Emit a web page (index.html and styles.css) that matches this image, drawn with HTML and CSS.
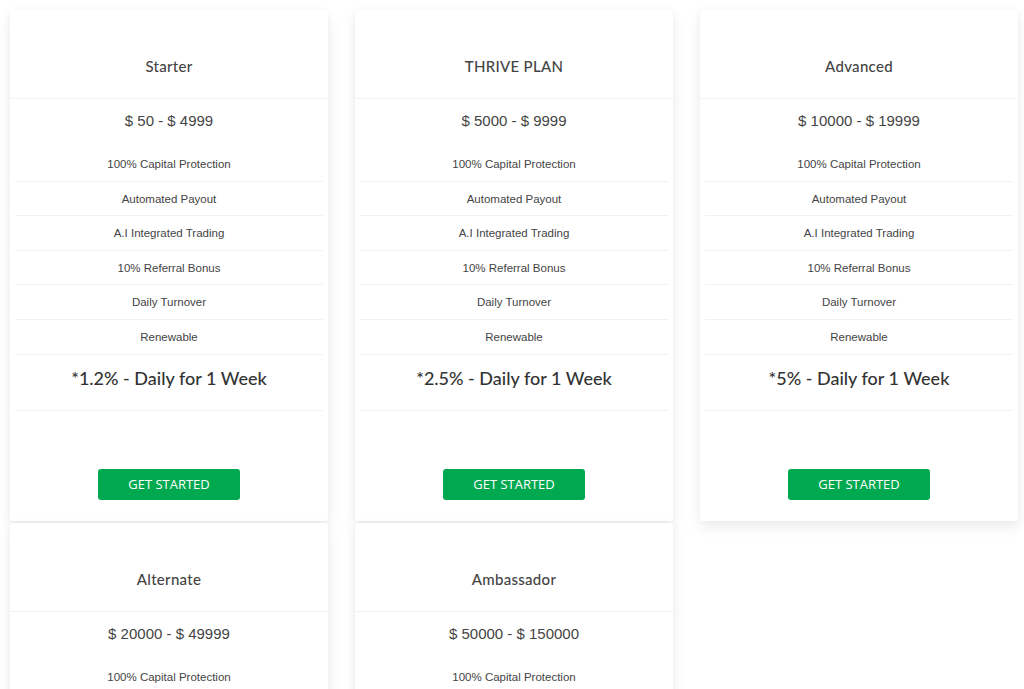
FILE: index.html
```html
<!DOCTYPE html>
<html>
<head>
<meta charset="utf-8">
<link rel="stylesheet" href="styles.css">
</head>
<body>
<div class="plans">
  <div class="card">
    <div class="title">Starter</div>
    <div class="price">$ 50 - $ 4999</div>
    <ul class="features">
      <li>100% Capital Protection</li>
      <li>Automated Payout</li>
      <li>A.I Integrated Trading</li>
      <li>10% Referral Bonus</li>
      <li>Daily Turnover</li>
      <li>Renewable</li>
    </ul>
    <div class="rate">*1.2% - Daily for 1 Week</div>
    <div class="action"><a class="btn">GET STARTED</a></div>
  </div>
  <div class="card">
    <div class="title">THRIVE PLAN</div>
    <div class="price">$ 5000 - $ 9999</div>
    <ul class="features">
      <li>100% Capital Protection</li>
      <li>Automated Payout</li>
      <li>A.I Integrated Trading</li>
      <li>10% Referral Bonus</li>
      <li>Daily Turnover</li>
      <li>Renewable</li>
    </ul>
    <div class="rate">*2.5% - Daily for 1 Week</div>
    <div class="action"><a class="btn">GET STARTED</a></div>
  </div>
  <div class="card">
    <div class="title">Advanced</div>
    <div class="price">$ 10000 - $ 19999</div>
    <ul class="features">
      <li>100% Capital Protection</li>
      <li>Automated Payout</li>
      <li>A.I Integrated Trading</li>
      <li>10% Referral Bonus</li>
      <li>Daily Turnover</li>
      <li>Renewable</li>
    </ul>
    <div class="rate">*5% - Daily for 1 Week</div>
    <div class="action"><a class="btn">GET STARTED</a></div>
  </div>
  <div class="card">
    <div class="title">Alternate</div>
    <div class="price">$ 20000 - $ 49999</div>
    <ul class="features">
      <li>100% Capital Protection</li>
      <li>Automated Payout</li>
      <li>A.I Integrated Trading</li>
      <li>10% Referral Bonus</li>
      <li>Daily Turnover</li>
      <li>Renewable</li>
    </ul>
    <div class="rate">*10% - Daily for 1 Week</div>
    <div class="action"><a class="btn">GET STARTED</a></div>
  </div>
  <div class="card">
    <div class="title">Ambassador</div>
    <div class="price">$ 50000 - $ 150000</div>
    <ul class="features">
      <li>100% Capital Protection</li>
      <li>Automated Payout</li>
      <li>A.I Integrated Trading</li>
      <li>10% Referral Bonus</li>
      <li>Daily Turnover</li>
      <li>Renewable</li>
    </ul>
    <div class="rate">*15% - Daily for 1 Week</div>
    <div class="action"><a class="btn">GET STARTED</a></div>
  </div>
</div>
</body>
</html>
```

FILE: styles.css
```css
html, body {
  margin: 0;
  padding: 0;
  background: #ffffff;
  height: 689px;
  overflow: hidden;
}
body {
  font-family: "Liberation Sans", Arial, sans-serif;
  color: #444;
}
.plans {
  display: grid;
  grid-template-columns: 318px 318px 318px;
  column-gap: 27px;
  row-gap: 2px;
  padding: 10px 0 0 10px;
  align-items: start;
}
.card {
  background: #fff;
  box-shadow: 0 6px 14px rgba(0, 0, 0, 0.08), 0 0 6px rgba(0, 0, 0, 0.03);
  border-radius: 2px;
  text-align: center;
}
.title {
  font-family: "Lato", "Noto Sans", sans-serif;
  font-size: 15px;
  font-weight: 500;
  color: #444;
  letter-spacing: 0.3px;
  padding: 46px 0 22px;
  line-height: 20px;
  border-bottom: 1px solid #f3f3f3;
}
.price {
  font-size: 15px;
  line-height: 20px;
  color: #444;
  padding: 12px 0 16px;
}
.features {
  list-style: none;
  margin: 0 5px;
  padding: 0;
}
.features li {
  font-size: 11.5px;
  line-height: 16px;
  color: #444;
  padding: 9px 0 8.6px;
  border-bottom: 1px solid #f2f2f2;
}
.rate {
  font-family: "Lato", "Noto Sans", sans-serif;
  font-size: 18px;
  font-weight: 500;
  color: #333;
  line-height: 24px;
  padding: 11px 0 20px;
  margin: 0 5px;
  border-bottom: 1px solid #f2f2f2;
}
.action {
  padding: 58px 0 21px;
}
.btn {
  display: inline-block;
  width: 142px;
  height: 31px;
  line-height: 31px;
  background: #00a84f;
  color: #fff;
  font-family: "Open Sans", sans-serif;
  font-size: 13px;
  border-radius: 3px;
  text-decoration: none;
}
```
